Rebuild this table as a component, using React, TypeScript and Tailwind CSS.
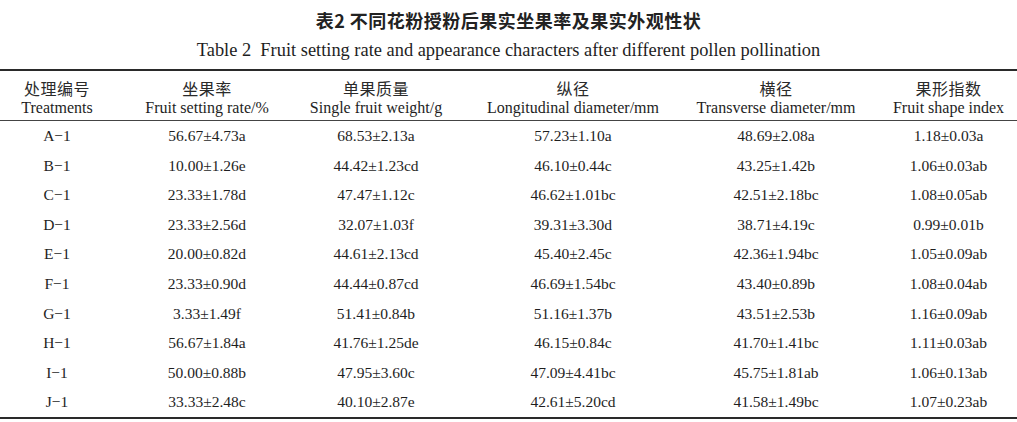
import React from "react";

const rows: string[][] = [
  ["A−1", "56.67±4.73a", "68.53±2.13a", "57.23±1.10a", "48.69±2.08a", "1.18±0.03a"],
  ["B−1", "10.00±1.26e", "44.42±1.23cd", "46.10±0.44c", "43.25±1.42b", "1.06±0.03ab"],
  ["C−1", "23.33±1.78d", "47.47±1.12c", "46.62±1.01bc", "42.51±2.18bc", "1.08±0.05ab"],
  ["D−1", "23.33±2.56d", "32.07±1.03f", "39.31±3.30d", "38.71±4.19c", "0.99±0.01b"],
  ["E−1", "20.00±0.82d", "44.61±2.13cd", "45.40±2.45c", "42.36±1.94bc", "1.05±0.09ab"],
  ["F−1", "23.33±0.90d", "44.44±0.87cd", "46.69±1.54bc", "43.40±0.89b", "1.08±0.04ab"],
  ["G−1", "3.33±1.49f", "51.41±0.84b", "51.16±1.37b", "43.51±2.53b", "1.16±0.09ab"],
  ["H−1", "56.67±1.84a", "41.76±1.25de", "46.15±0.84c", "41.70±1.41bc", "1.11±0.03ab"],
  ["I−1", "50.00±0.88b", "47.95±3.60c", "47.09±4.41bc", "45.75±1.81ab", "1.06±0.13ab"],
  ["J−1", "33.33±2.48c", "40.10±2.87e", "42.61±5.20cd", "41.58±1.49bc", "1.07±0.23ab"],
];

const headers: [string, string][] = [
  ["处理编号", "Treatments"],
  ["坐果率", "Fruit setting rate/%"],
  ["单果质量", "Single fruit weight/g"],
  ["纵径", "Longitudinal diameter/mm"],
  ["横径", "Transverse diameter/mm"],
  ["果形指数", "Fruit shape index"],
];

const grid = "grid grid-cols-[114px_186px_152px_242px_164px_159px]";
const cellPad = ["", "", "", "", "", "pl-[22px]"];

export default function App() {
  return (
    <div className="w-[1017px] h-[422px] bg-white text-[#1e1e1e] overflow-hidden">
      <div className="h-[69px] flex flex-col items-center">
        <div className="h-[39px] flex items-center justify-center pt-[1px] font-['Noto_Sans_CJK_SC',sans-serif] font-bold text-[18px] tracking-[0.5px] text-[#222]">
          表2&nbsp;不同花粉授粉后果实坐果率及果实外观性状
        </div>
        <div className="h-[23px] flex items-center justify-center font-['Liberation_Serif',serif] text-[18.4px] leading-none">
          Table 2&nbsp; Fruit setting rate and appearance characters after different pollen pollination
        </div>
      </div>
      <div className="border-t-2 border-[#2a2a2a]">
        <div className={`${grid} h-[50px] border-b border-[#444]`}>
          {headers.map(([zh, en], i) => (
            <div key={i} className={`flex flex-col items-center pt-[7px] ${cellPad[i]}`}>
              <div className="font-['Noto_Sans_CJK_SC',sans-serif] text-[16px] leading-[20px] tracking-[0.5px] text-[#2a2a2a]">{zh}</div>
              <div className="font-['Liberation_Serif',serif] text-[16px] leading-[20px]">{en}</div>
            </div>
          ))}
        </div>
        {rows.map((r, ri) => (
          <div key={ri} className={`${grid} h-[29.6px]`}>
            {r.map((c, ci) => (
              <div
                key={ci}
                className={`flex items-center justify-center font-['Liberation_Serif',serif] text-[15.5px] leading-none ${cellPad[ci]}`}
              >
                {c}
              </div>
            ))}
          </div>
        ))}
        <div className="border-t-2 border-[#2a2a2a]" />
      </div>
    </div>
  );
}
